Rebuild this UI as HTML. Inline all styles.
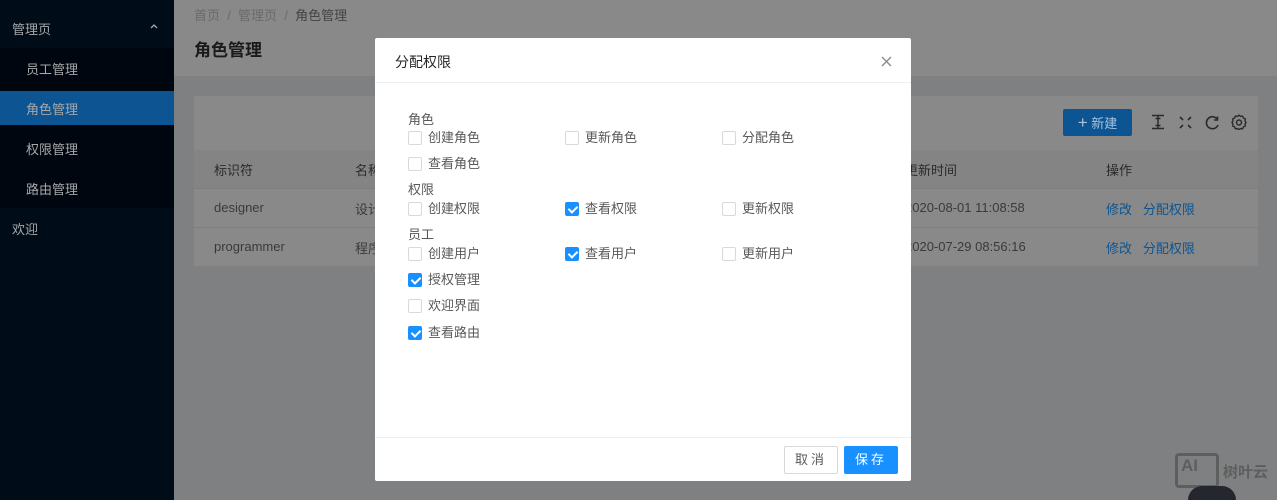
<!DOCTYPE html>
<html style="width:1277px;height:500px;overflow:hidden"><head><meta charset="utf-8"><style>
*{margin:0;padding:0;box-sizing:border-box}
body{width:1277px;height:500px;overflow:hidden;position:relative;background:#7f8082;font-family:"Liberation Sans","Noto Sans CJK SC",sans-serif;font-size:13px}
.a{position:absolute;white-space:nowrap}
.side{left:0;top:0;width:174px;height:500px;background:#000c17}
.cb{position:absolute;width:14px;height:14px;border:1px solid #d9d9d9;border-radius:2px;background:#fff}
.cb.on{background:#1890ff;border-color:#1890ff}
.cb.on::after{content:"";position:absolute;left:4px;top:1px;width:4px;height:7px;border:solid #fff;border-width:0 2px 2px 0;transform:rotate(45deg)}
.t{position:absolute;color:#595959;font-size:13px;line-height:16px}
</style></head><body>
<div class="a side"></div>
<div class="a" style="left:0;top:48px;width:174px;height:160px;background:#00060f"></div>
<div class="a" style="left:0;top:91px;width:174px;height:34px;background:#0d5592"></div>
<div class="a" style="left:12px;top:19px;color:#a6a8aa;font-size:13px">管理页</div>
<svg class="a" style="left:150px;top:23px" width="8" height="6" viewBox="0 0 8 6"><path d="M1 5L4 2L7 5" stroke="#a6a8aa" stroke-width="1.3" fill="none"/></svg>
<div class="a" style="left:26px;top:59px;color:#a6a8aa">员工管理</div>
<div class="a" style="left:26px;top:99px;color:#a6a8aa">角色管理</div>
<div class="a" style="left:26px;top:139px;color:#a6a8aa">权限管理</div>
<div class="a" style="left:26px;top:179px;color:#a6a8aa">路由管理</div>
<div class="a" style="left:12px;top:219px;color:#a6a8aa">欢迎</div>
<div class="a" style="left:174px;top:0;width:1103px;height:76px;background:#898989"></div>
<div class="a" style="left:194px;top:5px;color:#6a6a6a">首页 &nbsp;/&nbsp; 管理页 &nbsp;/&nbsp; <span style="color:#444">角色管理</span></div>
<div class="a" style="left:194px;top:36px;color:#1a1a1a;font-size:17px;font-weight:bold">角色管理</div>
<div class="a" style="left:194px;top:96px;width:1064px;height:170px;background:#898989"></div>
<div class="a" style="left:194px;top:150px;width:1064px;height:38px;background:#848484"></div>
<div class="a" style="left:194px;top:188px;width:1064px;height:1px;background:#7e7e7e"></div>
<div class="a" style="left:194px;top:227px;width:1064px;height:1px;background:#7e7e7e"></div>
<div class="a" style="left:214px;top:160px;color:#2a2a2a">标识符</div>
<div class="a" style="left:355px;top:160px;color:#2a2a2a">名称</div>
<div class="a" style="left:214px;top:200px;color:#3a3a3a">designer</div>
<div class="a" style="left:355px;top:199px;color:#3a3a3a">设计</div>
<div class="a" style="left:214px;top:239px;color:#3a3a3a">programmer</div>
<div class="a" style="left:355px;top:238px;color:#3a3a3a">程序</div>
<div class="a" style="left:905px;top:160px;color:#2a2a2a">更新时间</div>
<div class="a" style="left:905px;top:200px;color:#3a3a3a">2020-08-01 11:08:58</div>
<div class="a" style="left:905px;top:239px;color:#3a3a3a">2020-07-29 08:56:16</div>
<div class="a" style="left:1106px;top:160px;color:#2a2a2a">操作</div>
<div class="a" style="left:1106px;top:199px;color:#0d5592">修改 &nbsp;&nbsp;分配权限</div>
<div class="a" style="left:1106px;top:238px;color:#0d5592">修改 &nbsp;&nbsp;分配权限</div>
<div class="a" style="left:1063px;top:109px;width:69px;height:27px;background:#0d5592;border-radius:2px;color:#a8c4dc;text-align:center;line-height:27px"><span style="font-size:17px">+</span> 新建</div>
<svg class="a" style="left:1150px;top:114px" width="16" height="16" viewBox="0 0 16 16" fill="none" stroke="#2a2a2a" stroke-width="1.5"><path d="M2 1.5H14M2 14.5H14M8 1.5V14.5M5.5 4.5H10.5M5.5 11.5H10.5"/></svg>
<svg class="a" style="left:1179px;top:116px" width="13" height="13" viewBox="0 0 13 13" fill="none" stroke="#2a2a2a" stroke-width="1.6"><path d="M1 1L4 4M12 1L9 4M1 12L4 9M12 12L9 9"/></svg>
<svg class="a" style="left:1205px;top:115px" width="15" height="15" viewBox="0 0 15 15" fill="none" stroke="#2a2a2a" stroke-width="1.6"><path d="M12.5 4.5A6 6 0 1 0 13 10"/><path d="M12.5 1.5V5H9" /></svg>
<svg class="a" style="left:1231px;top:114px" width="16" height="16" viewBox="0 0 16 16" fill="none" stroke="#2a2a2a" stroke-width="1.4"><path d="M8 1.2L9.6 2.4L11.6 2.1L12.4 4L14.3 4.9L14 6.9L15 8.5L14 10.1L14.3 12L12.4 12.9L11.6 14.8L9.6 14.5L8 15.7L6.4 14.5L4.4 14.8L3.6 12.9L1.7 12L2 10.1L1 8.5L2 6.9L1.7 4.9L3.6 4L4.4 2.1L6.4 2.4Z"/><circle cx="8" cy="8.5" r="2.5"/></svg>
<div class="a" style="left:1175px;top:453px;width:44px;height:35px;border:3px solid #5e5e5e;border-radius:4px;color:#5e5e5e;font-weight:bold;font-size:17px;padding-left:3px">AI</div>
<div class="a" style="left:1223px;top:461px;color:#5e5e5e;font-size:15px;font-weight:bold">树叶云</div>
<div class="a" style="left:1188px;top:486px;width:48px;height:14px;border-radius:24px 24px 0 0;background:#25272e"></div>

<div class="a" style="left:375px;top:38px;width:536px;height:443px;background:#fff;border-radius:2px"></div>
<div class="a" style="left:375px;top:82px;width:536px;height:1px;background:#f0f0f0"></div>
<div class="a" style="left:375px;top:437px;width:536px;height:1px;background:#f0f0f0"></div>
<div class="a" style="left:395px;top:52px;color:#262626;font-size:14px">分配权限</div>
<svg class="a" style="left:881px;top:56px" width="11" height="11" viewBox="0 0 11 11" stroke="#8c8c8c" stroke-width="1.4"><path d="M1 1L10 10M10 1L1 10"/></svg>
<div class="t" style="left:408px;top:112px">角色</div>
<div class="cb" style="left:408px;top:131px"></div><div class="t" style="left:428px;top:130px">创建角色</div>
<div class="cb" style="left:565px;top:131px"></div><div class="t" style="left:585px;top:130px">更新角色</div>
<div class="cb" style="left:722px;top:131px"></div><div class="t" style="left:742px;top:130px">分配角色</div>
<div class="cb" style="left:408px;top:157px"></div><div class="t" style="left:428px;top:156px">查看角色</div>
<div class="t" style="left:408px;top:182px">权限</div>
<div class="cb" style="left:408px;top:202px"></div><div class="t" style="left:428px;top:201px">创建权限</div>
<div class="cb on" style="left:565px;top:202px"></div><div class="t" style="left:585px;top:201px">查看权限</div>
<div class="cb" style="left:722px;top:202px"></div><div class="t" style="left:742px;top:201px">更新权限</div>
<div class="t" style="left:408px;top:227px">员工</div>
<div class="cb" style="left:408px;top:247px"></div><div class="t" style="left:428px;top:246px">创建用户</div>
<div class="cb on" style="left:565px;top:247px"></div><div class="t" style="left:585px;top:246px">查看用户</div>
<div class="cb" style="left:722px;top:247px"></div><div class="t" style="left:742px;top:246px">更新用户</div>
<div class="cb on" style="left:408px;top:273px"></div><div class="t" style="left:428px;top:272px">授权管理</div>
<div class="cb" style="left:408px;top:299px"></div><div class="t" style="left:428px;top:298px">欢迎界面</div>
<div class="cb on" style="left:408px;top:326px"></div><div class="t" style="left:428px;top:325px">查看路由</div>
<div class="a" style="left:784px;top:446px;width:54px;height:28px;border:1px solid #d9d9d9;border-radius:2px;color:#595959;text-align:center;line-height:26px;font-size:13px;letter-spacing:3px">取消</div>
<div class="a" style="left:844px;top:446px;width:54px;height:28px;background:#1890ff;border-radius:2px;color:#fff;text-align:center;line-height:28px;font-size:13px;letter-spacing:3px">保存</div>
</body></html>
